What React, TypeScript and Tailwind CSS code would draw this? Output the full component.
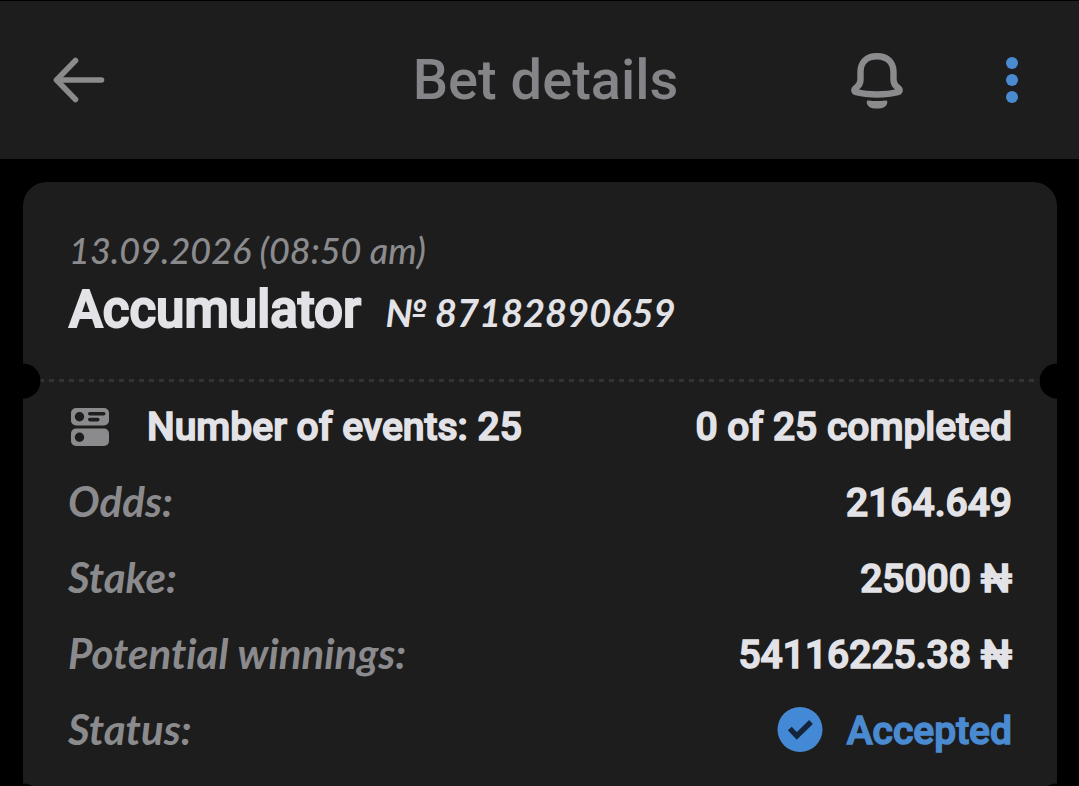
import React from "react";

function BackIcon() {
  return (
    <svg viewBox="0 0 52 48" className="h-12 w-[52px]" fill="none" stroke="#8b8b8e" strokeWidth="5.6" strokeLinecap="round" strokeLinejoin="round" aria-hidden="true">
      <path d="M22.500 4.500 3.500 24l19 19.500" />
      <path d="M6 24h42.500" />
    </svg>
  );
}

function BellIcon() {
  return (
    <svg viewBox="0 0 54 58" className="h-[58px] w-[54px]" fill="none" aria-hidden="true">
      <path
        d="M27 5.200C16 5.200 10.500 12 10.500 21v8c0 4-1.500 5.500-4.800 8-2 1.500-1.700 3.600.6 4.100 12 3.100 29.400 3.100 41.400 0 2.300-.5 2.600-2.600.6-4.100-3.300-2.500-4.800-4-4.800-8v-8C43.500 12 38 5.200 27 5.200Z"
        stroke="#8b8b8e"
        strokeWidth="6.400"
        strokeLinejoin="round"
      />
      <path d="M18.500 49.400c5.700.7 11.300.7 17 0 1.200-.1 1.800.4 1.800 1.500 0 4.300-4 6.600-10.300 6.600s-10.300-2.300-10.300-6.600c0-1.100.6-1.600 1.800-1.500Z" fill="#8b8b8e" />
    </svg>
  );
}

function MoreIcon() {
  return (
    <svg viewBox="0 0 12 48" className="h-12 w-3" fill="#4a8ad0" aria-hidden="true">
      <circle cx="6" cy="7" r="6" />
      <circle cx="6" cy="24" r="6" />
      <circle cx="6" cy="41" r="6" />
    </svg>
  );
}

function EventsIcon() {
  return (
    <svg viewBox="0 0 38 38" className="h-[38px] w-[38px]" aria-hidden="true">
      <rect width="38" height="17.500" rx="5" fill="#8b8b8e" />
      <rect y="20.500" width="38" height="17.500" rx="5" fill="#8b8b8e" />
      <g fill="#1d1d1d">
        <circle cx="8.500" cy="8.700" r="4.700" />
        <circle cx="8.500" cy="29.200" r="4.700" />
        <rect x="17" y="4" width="17.500" height="3.600" rx="1.800" />
        <rect x="17" y="9.800" width="11.500" height="3.600" rx="1.800" />
      </g>
    </svg>
  );
}

function AcceptedIcon() {
  return (
    <svg viewBox="0 0 46 48" className="h-12 w-[46px]" aria-hidden="true">
      <circle cx="23" cy="22.500" r="22.500" fill="#4489d5" />
      <path d="m12.800 21.500 7 7.500L34 15" fill="none" stroke="#14253b" strokeWidth="5.400" />
    </svg>
  );
}

function Notches() {
  return (
    <>
      <span className="absolute top-1/2 left-0 size-[35px] -translate-x-1/2 -translate-y-1/2 rounded-full bg-black" />
      <span className="absolute top-1/2 right-0 size-[35px] translate-x-1/2 -translate-y-1/2 rounded-full bg-black" />
    </>
  );
}

function Row({ label, children }: { label: string; children: React.ReactNode }) {
  return (
    <div className="flex h-[76px] items-center justify-between">
      <dt className="pb-1 font-['Lato',cursive] text-[42px] leading-none font-bold text-[#8b8b8e] italic [-webkit-text-stroke:0px] [font-variant-ligatures:none]">{label}</dt>
      <dd className="flex items-center gap-6">{children}</dd>
    </div>
  );
}

export default function App() {
  return (
    <div className="min-h-screen bg-black font-['Roboto',sans-serif] text-[#e3e3e7]">
      <header className="grid h-[159px] grid-cols-[1fr_auto_1fr] items-center border-t border-black bg-[#1d1d1d] pr-[61px] pl-[53px]">
        <button type="button" aria-label="Back" className="justify-self-start">
          <BackIcon />
        </button>
        <h1 className="pl-5 text-[56px] leading-none font-medium text-[#858589]">Bet details</h1>
        <div className="flex items-center gap-[102px] justify-self-end">
          <button type="button" aria-label="Notifications">
            <BellIcon />
          </button>
          <button type="button" aria-label="More options">
            <MoreIcon />
          </button>
        </div>
      </header>

      <main className="pt-[23px] pr-[22px] pl-[23px]">
        <section className="relative overflow-hidden rounded-t-3xl bg-[#1d1d1d] pb-[17px]">
          <div className="px-[46px] pt-[38px] pb-[30px]">
            <p className="font-['Lato',cursive] text-[36px] leading-[60px] font-medium text-[#8b8b8e] italic">13.09.2026 (08:50 am)</p>
            <div className="flex items-baseline gap-6 leading-[60px]">
              <h2 className="text-[51px] font-medium [-webkit-text-stroke:2px]">Accumulator</h2>
              <p className="font-['Lato',cursive] text-[38px] font-bold italic">№ 87182890659</p>
            </div>
          </div>

          <div className="relative flex h-[17px] items-center">
            <div className="mx-4 h-[3px] flex-1 bg-[repeating-linear-gradient(90deg,#333333_0_5px,transparent_5px_10px)]" />
            <Notches />
          </div>

          <div className="px-[45px] text-[39px] leading-none font-medium [-webkit-text-stroke:1.500px]">
            <div className="flex h-[76px] items-center justify-between">
              <div className="flex items-center gap-[38px] pl-[3px]">
                <EventsIcon />
                <p>Number of events: 25</p>
              </div>
              <p>0 of 25 completed</p>
            </div>
            <dl>
              <Row label="Odds:">2164.649</Row>
              <Row label="Stake:">25000 ₦</Row>
              <Row label="Potential winnings:">54116225.38 ₦</Row>
              <Row label="Status:">
                <AcceptedIcon />
                <span className="text-[#4a8ad0]">Accepted</span>
              </Row>
            </dl>
          </div>

          <div className="absolute inset-x-0 -bottom-8 h-[35px]">
            <Notches />
          </div>
        </section>
      </main>
    </div>
  );
}
